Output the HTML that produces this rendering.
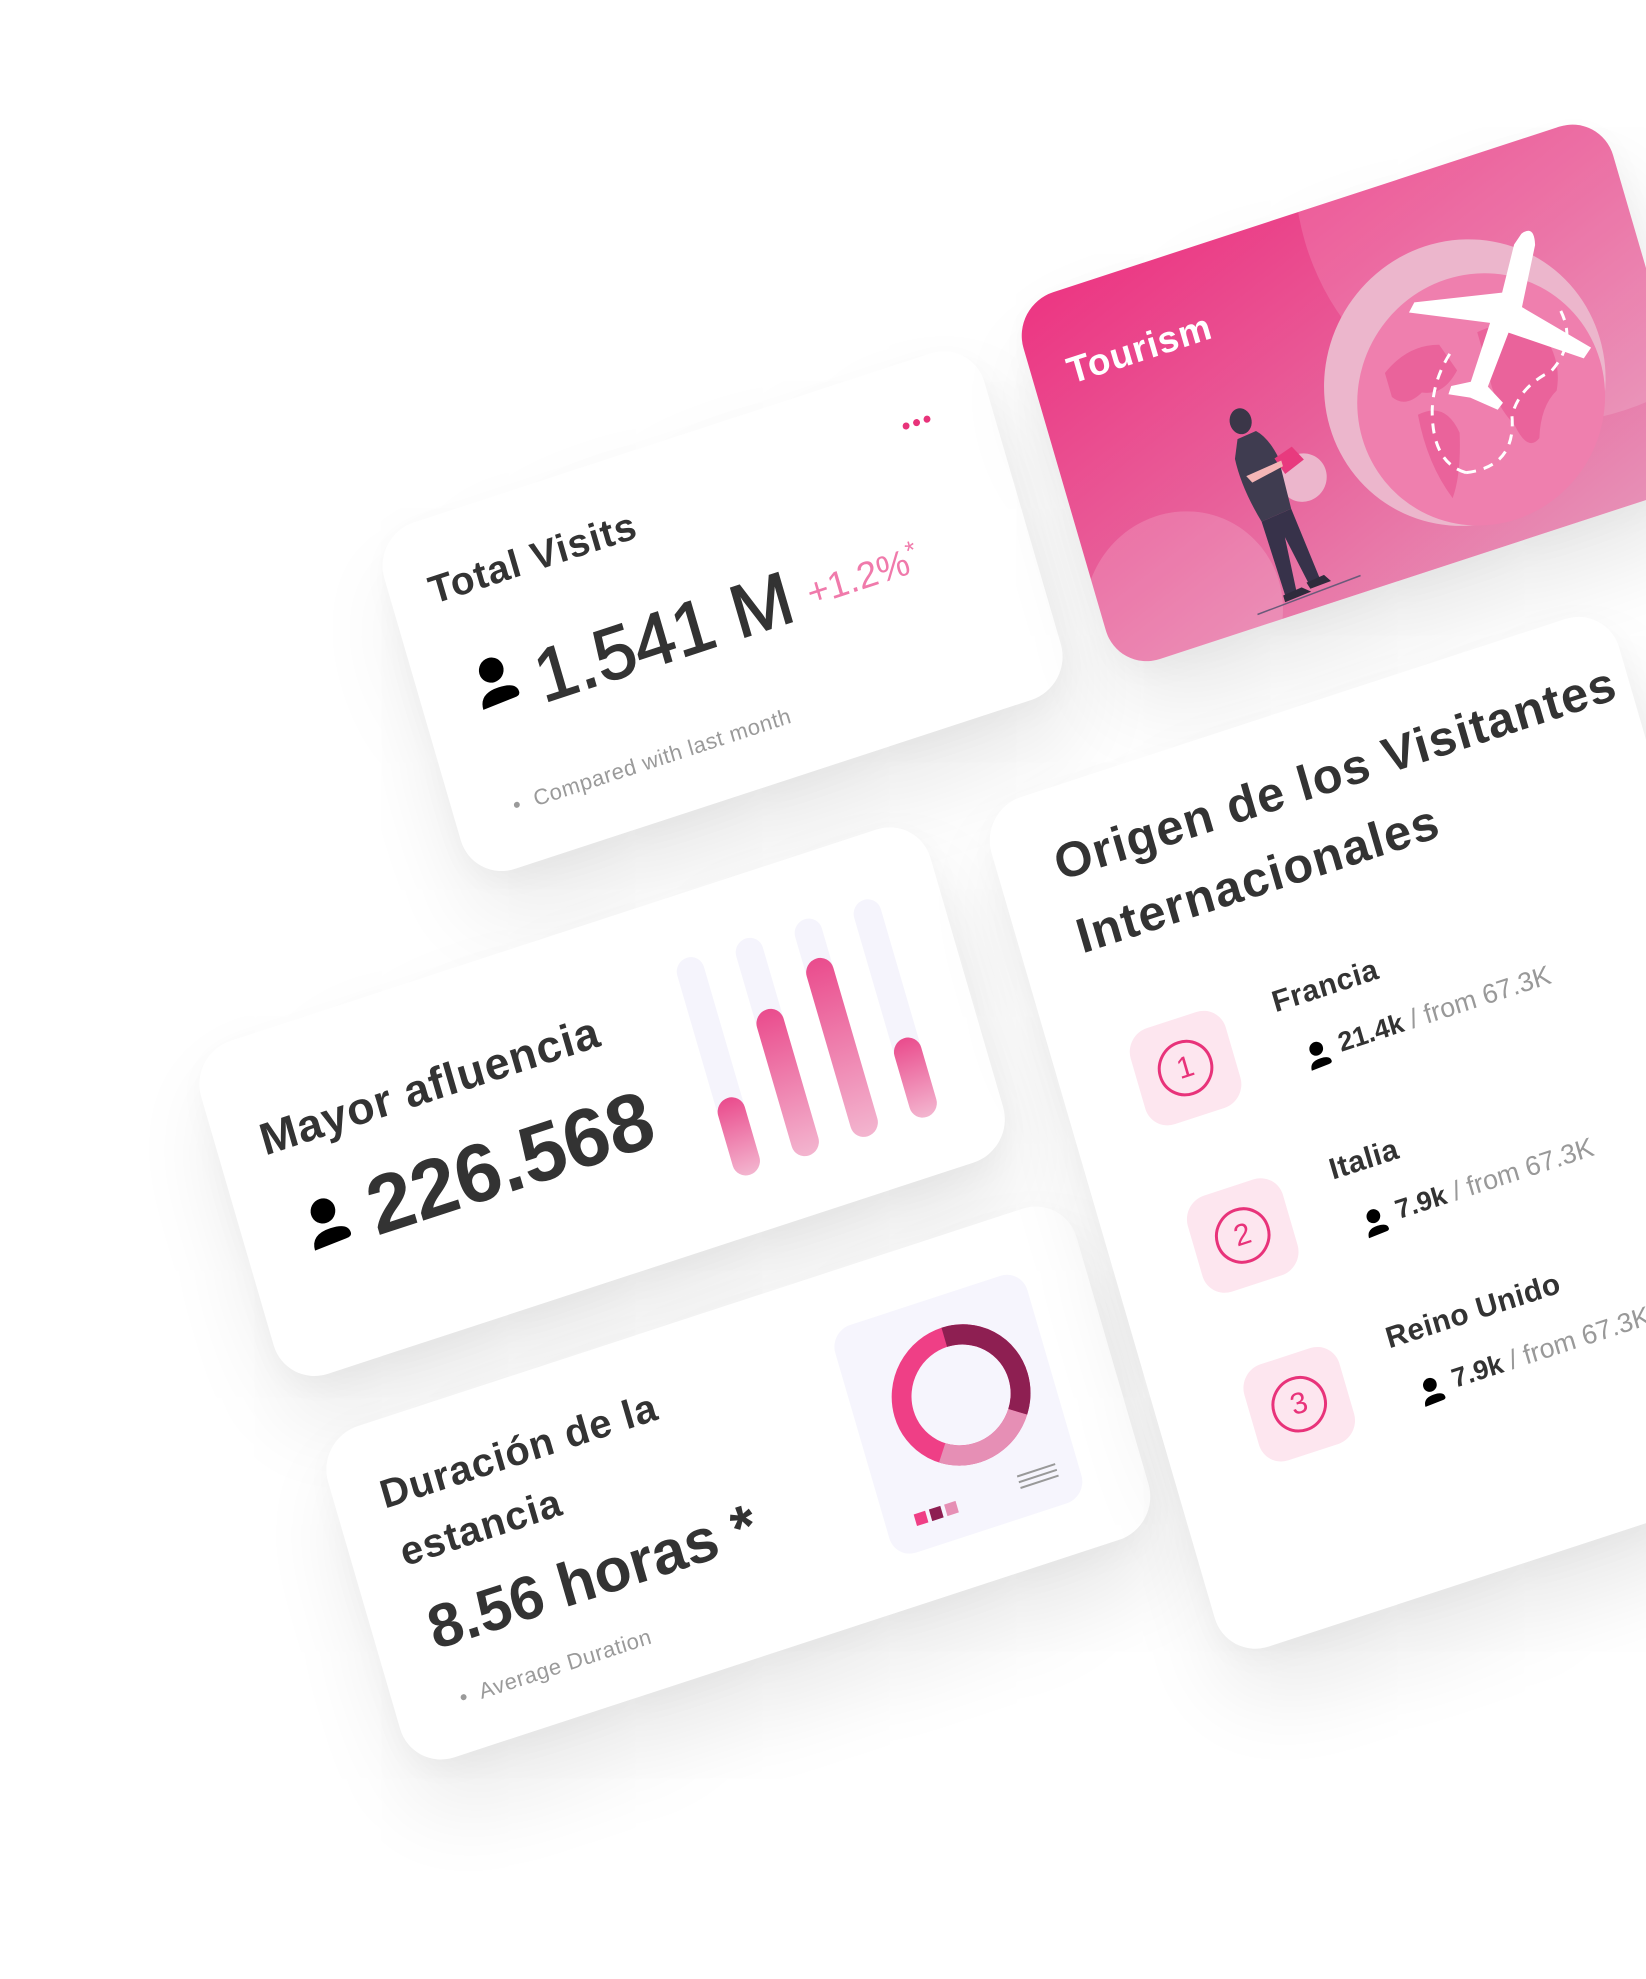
<!DOCTYPE html>
<html><head><meta charset="utf-8">
<style>
html,body{margin:0;padding:0;background:#fff;}
body{width:1646px;height:1979px;overflow:hidden;position:relative;font-family:"Liberation Sans",sans-serif;}
#plane{position:absolute;left:372px;top:536px;width:10px;height:10px;transform:matrix(0.951,-0.311,0.28,0.96,0,0);transform-origin:0 0;}
.card{position:absolute;background:#fff;border-radius:44px;box-shadow:0 50px 90px rgba(0,0,0,0.09),0 10px 30px rgba(0,0,0,0.03);overflow:hidden;}
.t{position:absolute;white-space:nowrap;color:#333;font-weight:bold;line-height:1;}
.g{position:absolute;white-space:nowrap;color:#9a9a9a;font-size:22px;letter-spacing:0.6px;line-height:1;}
.ic{position:absolute;}
.track{position:absolute;width:28px;border-radius:14px;background:#f5f4fc;}
.fill{position:absolute;left:0;bottom:0;width:28px;border-radius:14px;background:linear-gradient(#ea4c8d,#f3b5cf);}
.box{position:absolute;width:100px;height:100px;border-radius:24px;background:#fde6ef;}
.box span{position:absolute;left:22px;top:22px;width:50px;height:50px;border:3px solid #e8337a;border-radius:50%;color:#e8337a;font-size:30px;text-align:center;line-height:50px;}
</style></head><body>
<div id="plane">

<!-- Total visits -->
<div class="card" style="left:0;top:0;width:631px;height:361px;">
  <div style="position:absolute;left:540px;top:52px;">
    <span style="display:inline-block;width:7px;height:7px;border-radius:50%;background:#e8337a;margin-right:4px"></span><span style="display:inline-block;width:7px;height:7px;border-radius:50%;background:#e8337a;margin-right:4px"></span><span style="display:inline-block;width:7px;height:7px;border-radius:50%;background:#e8337a"></span>
  </div>
  <div class="t" style="left:40px;top:52px;font-size:39px;letter-spacing:1px;">Total Visits</div>
  <svg class="ic" style="left:54px;top:148px" width="50" height="54" viewBox="0 0 24 26"><circle cx="11" cy="8" r="6" fill="#000"/><path d="M2 25 Q2 17 12 17 Q21 17 21 22 Q21 24 18 24 Z" fill="#000"/></svg>
  <div class="t" style="left:118px;top:150px;font-size:74px;font-weight:normal;-webkit-text-stroke:1.5px #333;">1.541 M</div>
  <div class="t" style="left:402px;top:168px;font-size:37px;font-weight:normal;color:#f07aab;">+1.2%<sup style="font-size:26px">*</sup></div>
  <div class="g" style="left:60px;top:290px;">•&nbsp; Compared with last month</div>
</div>

<!-- Tourism -->
<div class="card" style="left:678px;top:-20px;width:620px;height:382px;background:linear-gradient(160deg,#ec3582 0%,#e8609a 50%,#e793b8 100%);">
  <div style="position:absolute;left:300px;top:-230px;width:520px;height:520px;border-radius:50%;background:rgba(255,255,255,0.14)"></div>
  <div style="position:absolute;left:-20px;top:245px;width:200px;height:200px;border-radius:50%;background:rgba(255,255,255,0.16)"></div>
  <div style="position:absolute;left:272px;top:72px;width:284px;height:284px;border-radius:50%;background:#ecb6cc"></div>
  <div style="position:absolute;left:300px;top:110px;width:250px;height:250px;border-radius:50%;background:#ef7fae"></div>
  <svg style="position:absolute;left:300px;top:110px" width="250" height="250" viewBox="0 0 250 250">
    <path d="M40 70 Q70 50 100 60 L110 90 Q90 110 70 100 Q50 110 40 95 Z M60 120 Q90 115 95 150 Q85 190 70 210 Q55 170 60 120 Z M140 60 Q170 55 200 75 Q215 110 200 140 Q180 150 170 180 Q155 190 150 160 Q135 130 140 100 Z" fill="#e95c96" opacity="0.8"/>
    <path d="M90 190 Q60 170 75 120 Q85 90 110 70 M90 190 Q140 200 150 150 Q165 125 200 120 Q235 100 225 60" fill="none" stroke="#fff" stroke-width="3" stroke-dasharray="10 8"/>
  </svg>
  <svg style="position:absolute;left:360px;top:80px" width="200" height="180" viewBox="0 0 200 180">
    <path d="M150 10 Q165 5 160 25 L130 80 L185 140 L175 148 L110 100 L75 145 L85 165 L78 170 L55 150 L35 140 L40 133 L60 135 L95 85 L20 50 L28 42 L115 60 L140 18 Z" fill="#fff"/>
  </svg>
  <div style="position:absolute;left:208px;top:230px;width:48px;height:48px;border-radius:50%;background:#ecb6cc"></div>
  <svg style="position:absolute;left:150px;top:165px" width="110" height="210" viewBox="0 0 110 210">
    <ellipse cx="38" cy="16" rx="11" ry="13" fill="#3b3648"/>
    <path d="M30 32 L50 30 Q60 40 64 62 L62 115 L30 118 Q20 80 22 50 Z" fill="#3f3c50"/>
    <path d="M30 118 L62 115 L70 190 L58 192 L48 140 L44 195 L32 195 Z" fill="#37324a"/>
    <path d="M30 195 L50 193 L58 200 L30 202 Z M56 190 L75 188 L80 196 L58 197 Z" fill="#2f2b3c"/>
    <path d="M60 62 L80 56 L88 72 L66 80 Z" fill="#e83a7e"/>
    <path d="M28 70 L66 66 L66 72 L32 78 Z" fill="#f4b6b6"/>
    <line x1="0" y1="205" x2="110" y2="200" stroke="#6a5a7a" stroke-width="1.5"/>
  </svg>
  <div class="t" style="left:36px;top:62px;font-size:37px;letter-spacing:1px;color:#fff;">Tourism</div>
</div>

<!-- Mayor afluencia -->
<div class="card" style="left:-321px;top:436px;width:767px;height:347px;">
  <div class="t" style="left:45px;top:82px;font-size:45px;letter-spacing:1px;">Mayor afluencia</div>
  <svg class="ic" style="left:62px;top:174px" width="50" height="54" viewBox="0 0 24 26"><circle cx="11" cy="8" r="6" fill="#000"/><path d="M2 25 Q2 17 12 17 Q21 17 21 22 Q21 24 18 24 Z" fill="#000"/></svg>
  <div class="t" style="left:130px;top:163px;font-size:82px;">226.568</div>
  <div class="track" style="left:491px;top:63px;height:226px;"><div class="fill" style="height:80px"></div></div>
  <div class="track" style="left:553px;top:63px;height:226px;"><div class="fill" style="height:152px"></div></div>
  <div class="track" style="left:615px;top:63px;height:226px;"><div class="fill" style="height:185px"></div></div>
  <div class="track" style="left:677px;top:63px;height:226px;"><div class="fill" style="height:82px"></div></div>
</div>

<!-- Duración -->
<div class="card" style="left:-307px;top:842px;width:787px;height:345px;">
  <div class="t" style="left:47px;top:54px;font-size:40px;letter-spacing:1px;">Duración de la</div>
  <div class="t" style="left:50px;top:115px;font-size:40px;letter-spacing:1px;">estancia</div>
  <div class="t" style="left:56px;top:186px;font-size:61px;">8.56 horas *</div>
  <div class="g" style="left:66px;top:280px;">•&nbsp; Average Duration</div>
  <div style="position:absolute;left:523px;top:57px;width:202px;height:237px;border-radius:22px;background:#f6f5fd"></div>
  <svg style="position:absolute;left:523px;top:57px" width="202" height="237" viewBox="0 0 202 237">
    <g transform="rotate(-90 109 101)">
      <circle cx="109" cy="101" r="60" fill="none" stroke="#ef3f86" stroke-width="20"/>
      <circle cx="109" cy="101" r="60" fill="none" stroke="#8e1f52" stroke-width="20" stroke-dasharray="130 400"/>
      <circle cx="109" cy="101" r="60" fill="none" stroke="#e68fb5" stroke-width="20" stroke-dasharray="0 130 95 400"/>
    </g>
    <rect x="30" y="200" width="12" height="12" fill="#ef3f86"/><rect x="46" y="200" width="12" height="12" fill="#8e1f52"/><rect x="62" y="200" width="12" height="12" fill="#e68fb5"/>
    <g stroke="#999" stroke-width="2"><line x1="140" y1="196" x2="180" y2="196"/><line x1="140" y1="202" x2="180" y2="202"/><line x1="140" y1="208" x2="180" y2="208"/></g>
  </svg>
</div>

<!-- Origen -->
<div class="card" style="left:506px;top:450px;width:660px;height:885px;">
  <div class="t" style="left:58px;top:52px;font-size:49px;letter-spacing:1.3px;">Origen de los Visitantes</div>
  <div class="t" style="left:59px;top:128px;font-size:49px;letter-spacing:1.3px;">Internacionales</div>

  <div class="box" style="left:76px;top:259px;"><span>1</span></div>
  <div class="t" style="left:228px;top:260px;font-size:30px;letter-spacing:0.5px;">Francia</div>
  <svg class="ic" style="left:244px;top:322px" width="28" height="30" viewBox="0 0 24 26"><circle cx="11" cy="8" r="6" fill="#000"/><path d="M2 25 Q2 17 12 17 Q21 17 21 22 Q21 24 18 24 Z" fill="#000"/></svg>
  <div class="t" style="left:280px;top:320px;font-size:27px;">21.4k <span style="color:#999;font-weight:normal">/ from 67.3K</span></div>

  <div class="box" style="left:84px;top:436px;"><span>2</span></div>
  <div class="t" style="left:236px;top:437px;font-size:30px;letter-spacing:0.5px;">Italia</div>
  <svg class="ic" style="left:252px;top:499px" width="28" height="30" viewBox="0 0 24 26"><circle cx="11" cy="8" r="6" fill="#000"/><path d="M2 25 Q2 17 12 17 Q21 17 21 22 Q21 24 18 24 Z" fill="#000"/></svg>
  <div class="t" style="left:288px;top:497px;font-size:27px;">7.9k <span style="color:#999;font-weight:normal">/ from 67.3K</span></div>

  <div class="box" style="left:91px;top:614px;"><span>3</span></div>
  <div class="t" style="left:243px;top:615px;font-size:30px;letter-spacing:0.5px;">Reino Unido</div>
  <svg class="ic" style="left:259px;top:677px" width="28" height="30" viewBox="0 0 24 26"><circle cx="11" cy="8" r="6" fill="#000"/><path d="M2 25 Q2 17 12 17 Q21 17 21 22 Q21 24 18 24 Z" fill="#000"/></svg>
  <div class="t" style="left:295px;top:675px;font-size:27px;">7.9k <span style="color:#999;font-weight:normal">/ from 67.3K</span></div>
</div>

</div>
</body></html>
